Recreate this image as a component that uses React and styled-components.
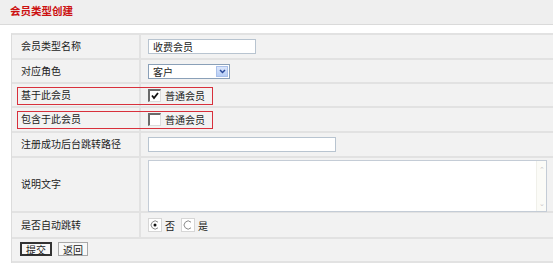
import styled, { createGlobalStyle } from "styled-components";

const GlobalStyle = createGlobalStyle`
  html, body {
    margin: 0;
    padding: 0;
    background: #ffffff;
    overflow: hidden;
  }
  body {
    font-family: "Noto Sans CJK SC", "Liberation Sans", sans-serif;
    font-size: 10px;
    color: #222;
  }
`;

const Page = styled.div`
  width: 553px;
  height: 269px;
  background: #fff;
`;

const Header = styled.div`
  height: 25px;
  background: #efefef;
  border-bottom: 1px solid #dadada;
  padding-left: 10px;
  display: flex;
  align-items: center;
  box-sizing: border-box;
`;

const Title = styled.h1`
  margin: 0;
  font-size: 10.5px;
  font-weight: bold;
  color: #cc1111;
  line-height: 1;
  margin-top: -2px;
`;

const Form = styled.div`
  margin: 8px 0 0 11px;
  border-top: 2px solid #e2e2e2;
  border-left: 1px solid #dcdcdc;
  background: #f2f2f2;
`;

const Row = styled.div`
  position: relative;
  display: flex;
  height: ${(p) => p.$h || 25}px;
  box-sizing: border-box;
  border-bottom: 2px solid #e2e2e2;
`;

const Label = styled.div`
  width: 129px;
  flex-shrink: 0;
  box-sizing: border-box;
  padding-left: 9px;
  border-right: 2px solid #e2e2e2;
  display: flex;
  align-items: center;
  padding-bottom: 2px;
`;

const Value = styled.div`
  flex: 1;
  display: flex;
  align-items: center;
  padding-left: 7px;
  gap: 2px;
`;

const TextInput = styled.div`
  width: ${(p) => p.$w}px;
  height: 15px;
  box-sizing: border-box;
  background: #fff;
  border: 1px solid #b8c4d0;
  padding-left: 4px;
  display: flex;
  align-items: center;
  font-size: 10px;
`;

const Select = styled.div`
  width: 82px;
  height: 15px;
  box-sizing: border-box;
  background: #fff;
  border: 1px solid #8aa0b8;
  display: flex;
  align-items: center;
  justify-content: space-between;
  padding-left: 4px;
  margin-top: 1px;
`;

const SelectButton = styled.span`
  width: 12px;
  height: 11px;
  margin-right: 1px;
  background: linear-gradient(#dbe6fb, #b6cdf5);
  border: 1px solid #a9c0ea;
  box-sizing: border-box;
  display: flex;
  align-items: center;
  justify-content: center;
`;

const Highlight = styled.div`
  position: absolute;
  left: 5px;
  top: 3px;
  width: 196px;
  height: 18px;
  border: 1px solid #d8303c;
  box-sizing: border-box;
  pointer-events: none;
`;

const Check = styled.span`
  width: 13px;
  height: 13px;
  box-sizing: border-box;
  background: #fff;
  border-top: 2px solid #6a6a6a;
  border-left: 2px solid #6a6a6a;
  border-right: 1px solid #dcdcdc;
  border-bottom: 1px solid #dcdcdc;
  display: inline-flex;
  align-items: center;
  justify-content: center;
  margin-right: 2px;
`;

const TextArea = styled.div`
  width: 399px;
  height: 52px;
  box-sizing: border-box;
  background: #fff;
  border: 1px solid #c4ccd6;
  display: flex;
  justify-content: flex-end;
  margin-top: 2px;
`;

const ScrollBar = styled.div`
  width: 9px;
  display: flex;
  flex-direction: column;
  justify-content: space-between;
  align-items: center;
  background: #fbfbf7;
  border-left: 1px solid #f0f0ea;
  color: #c8c8c8;
  font-size: 7px;
  padding: 3px 0;
`;

const Radio = styled.span`
  width: 14px;
  height: 14px;
  box-sizing: border-box;
  background: #fff;
  border: 1px solid #d6d6d6;
  display: inline-flex;
  align-items: center;
  justify-content: center;
`;

const RadioText = styled.span`
  margin-right: 4px;
  margin-left: 1px;
`;

const Button = styled.span`
  display: inline-flex;
  align-items: center;
  justify-content: center;
  height: 14px;
  padding: 0 4px;
  box-sizing: border-box;
  background: #f8f8f8;
  border: ${(p) => (p.$primary ? "2px solid #333" : "1px solid #a8a8a8")};
  font-size: 10px;
`;

const ButtonBar = styled.div`
  display: flex;
  align-items: center;
  gap: 6px;
  padding-left: 8px;
  padding-bottom: 2px;
`;

const CheckMark = () => (
  <svg width="8" height="8" viewBox="0 0 8 8">
    <path d="M1 3.5 L3 6 L7 1" stroke="#111" strokeWidth="1.8" fill="none" />
  </svg>
);

const RadioDot = ({ checked }) => (
  <svg width="10" height="10" viewBox="0 0 10 10">
    <path d="M8 2.2 A4 4 0 1 0 8 7.8" stroke="#888" strokeWidth="1" fill="none" />
    {checked && <circle cx="5" cy="5" r="1.5" fill="#111" />}
  </svg>
);

const Chevron = () => (
  <svg width="7" height="5" viewBox="0 0 7 5">
    <path d="M1 1 L3.5 3.5 L6 1" stroke="#2a4a9a" strokeWidth="1.5" fill="none" />
  </svg>
);

export default function App() {
  return (
    <Page>
      <GlobalStyle />
      <Header>
        <Title>会员类型创建</Title>
      </Header>
      <Form>
        <Row $h={25}>
          <Label>会员类型名称</Label>
          <Value>
            <TextInput $w={108}>收费会员</TextInput>
          </Value>
        </Row>
        <Row $h={24}>
          <Label>对应角色</Label>
          <Value>
            <Select>
              客户
              <SelectButton>
                <Chevron />
              </SelectButton>
            </Select>
          </Value>
        </Row>
        <Row $h={24}>
          <Highlight />
          <Label>基于此会员</Label>
          <Value>
            <Check>
              <CheckMark />
            </Check>
            普通会员
          </Value>
        </Row>
        <Row $h={25}>
          <Highlight />
          <Label>包含于此会员</Label>
          <Value>
            <Check />
            普通会员
          </Value>
        </Row>
        <Row $h={25}>
          <Label>注册成功后台跳转路径</Label>
          <Value>
            <TextInput $w={188} />
          </Value>
        </Row>
        <Row $h={55}>
          <Label>说明文字</Label>
          <Value>
            <TextArea>
              <ScrollBar>
                <span>⌃</span>
                <span>⌄</span>
              </ScrollBar>
            </TextArea>
          </Value>
        </Row>
        <Row $h={26}>
          <Label>是否自动跳转</Label>
          <Value>
            <Radio>
              <RadioDot checked />
            </Radio>
            <RadioText>否</RadioText>
            <Radio>
              <RadioDot />
            </Radio>
            <RadioText>是</RadioText>
          </Value>
        </Row>
        <Row $h={24}>
          <ButtonBar>
            <Button $primary>提交</Button>
            <Button>返回</Button>
          </ButtonBar>
        </Row>
      </Form>
    </Page>
  );
}
